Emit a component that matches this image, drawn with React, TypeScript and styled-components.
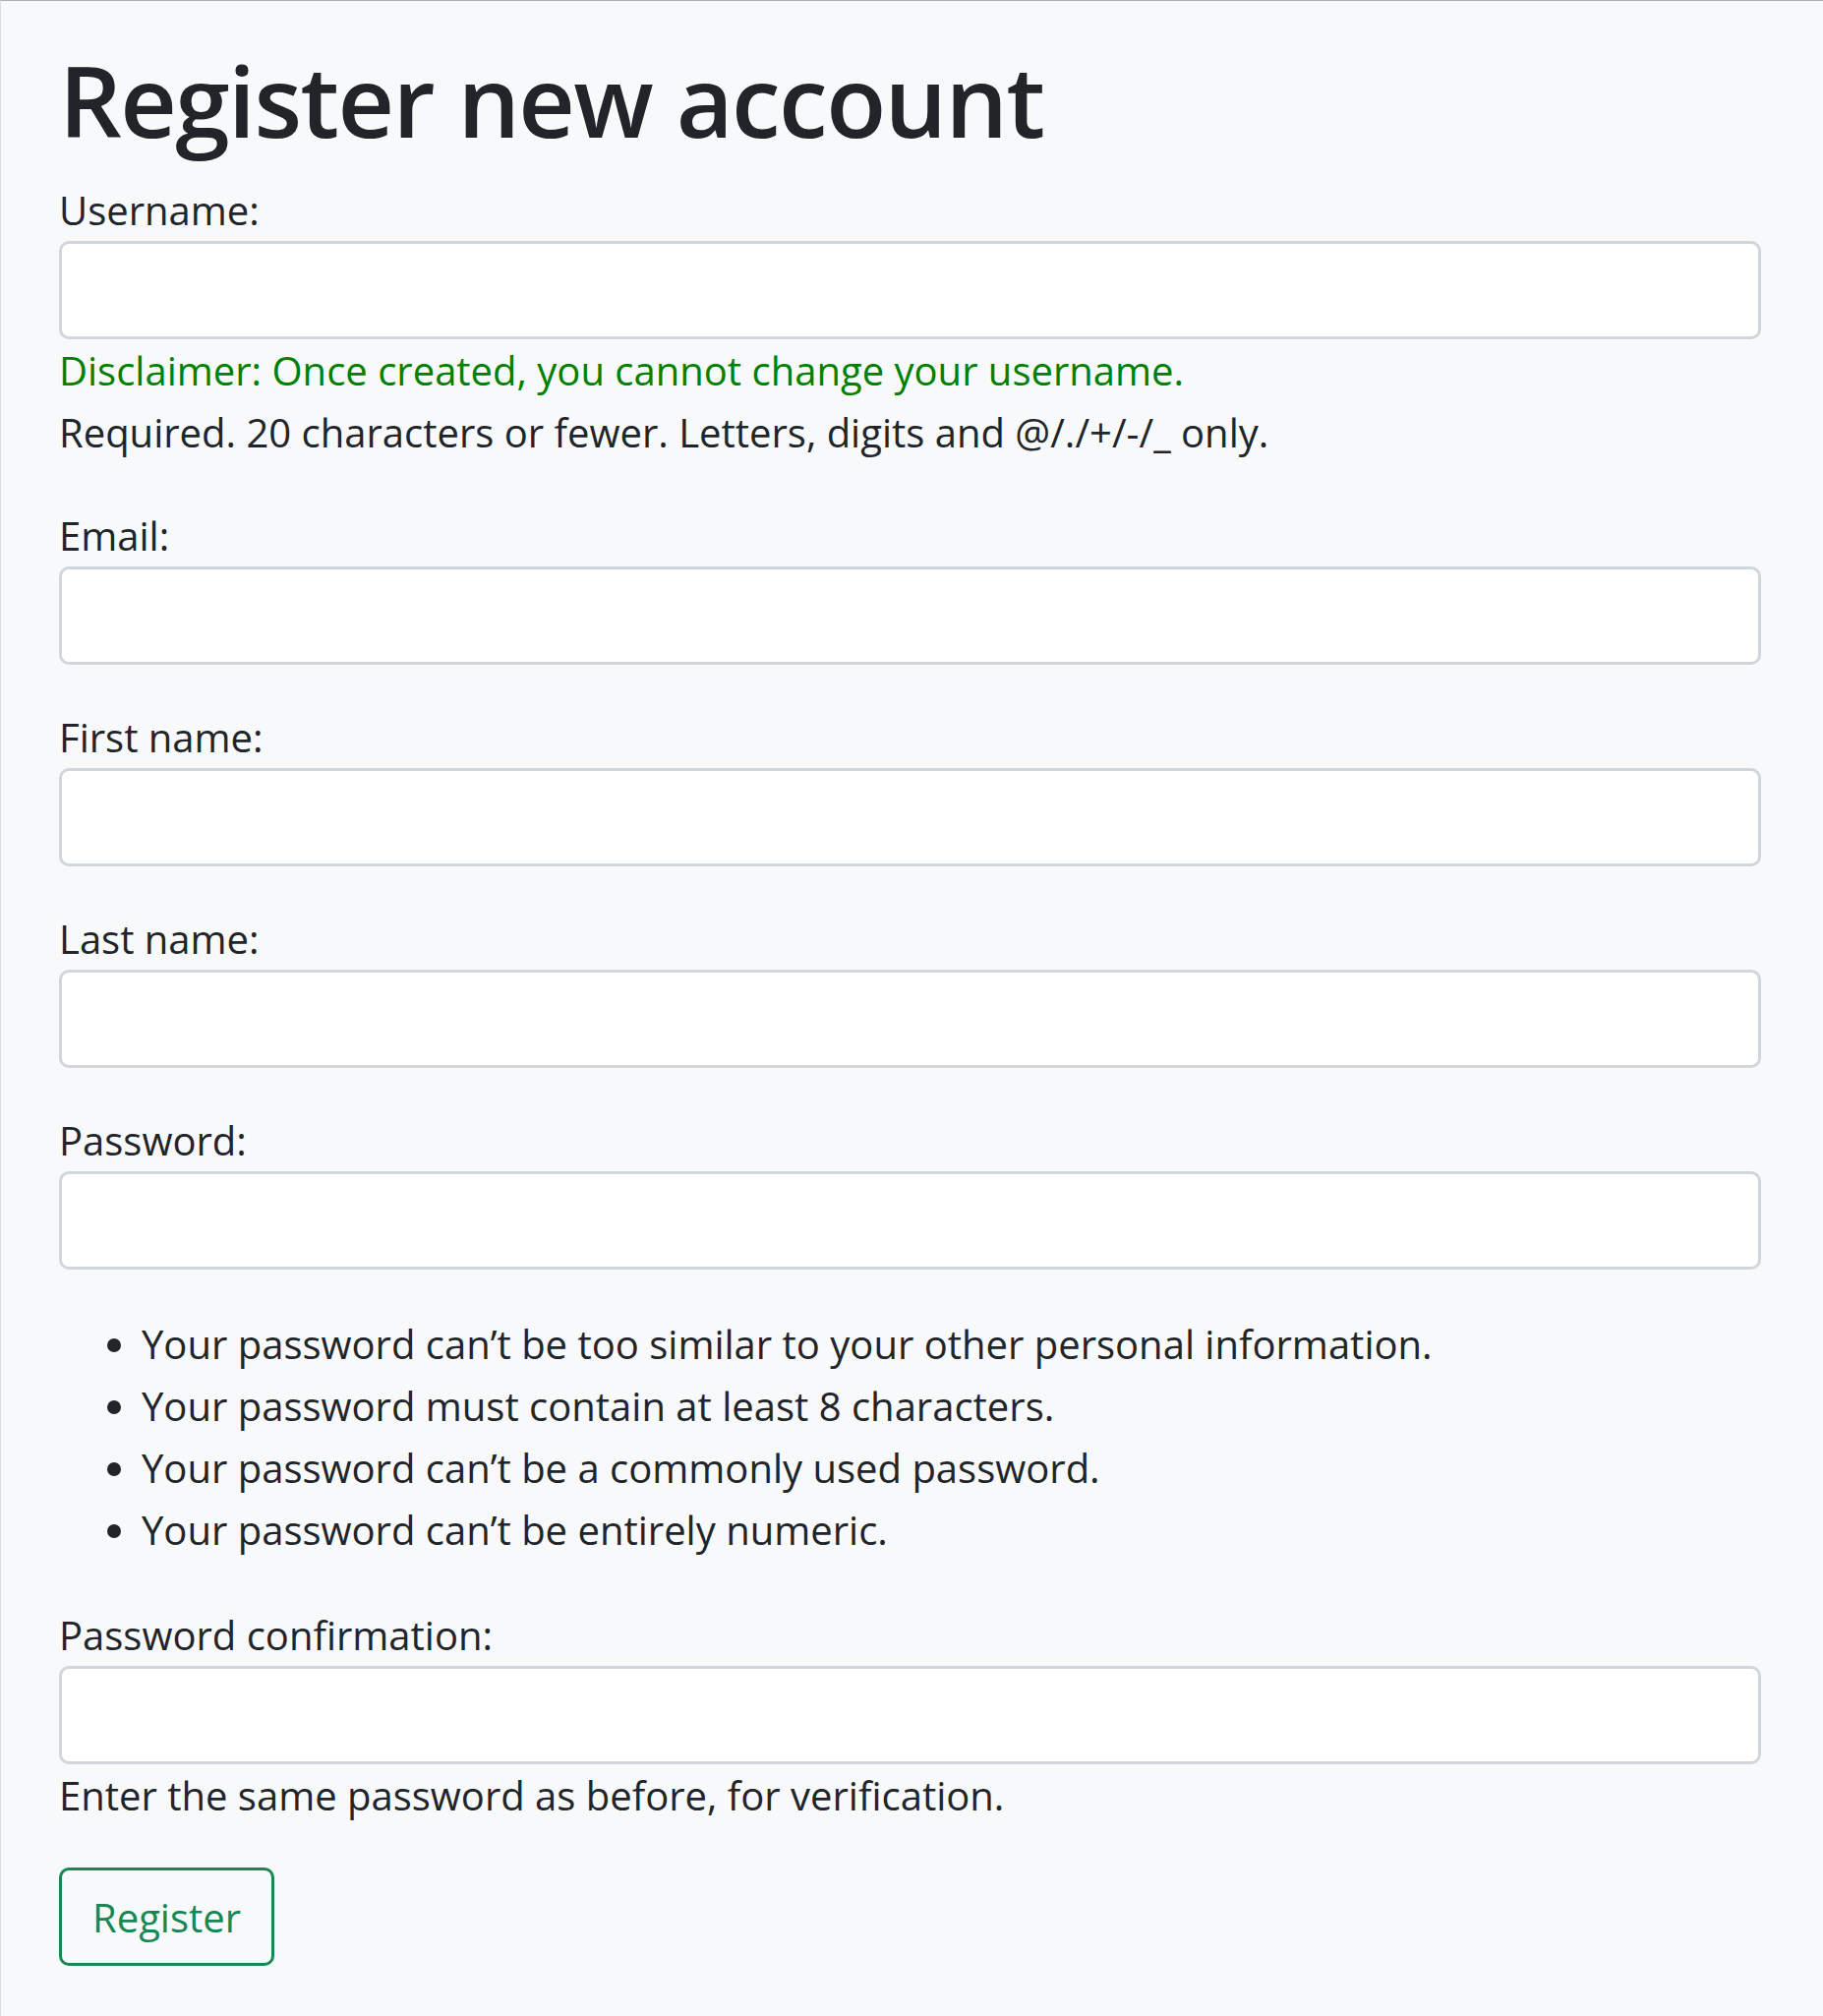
import React from "react";
import styled, { createGlobalStyle } from "styled-components";

const FONT = `"Open Sans", "Noto Sans", "Liberation Sans", sans-serif`;

const GlobalStyle = createGlobalStyle`
  html, body {
    margin: 0;
    padding: 0;
  }
  body {
    background: #f8f9fa;
    color: #212529;
    font-family: ${FONT};
  }
  * { box-sizing: border-box; }
`;

const Page = styled.main`
  min-height: 2050px;
  border-top: 1px solid #acacac;
  border-left: 1px solid #dcdcdc;
  padding: 37px 63px 0 59px;
`;

const Title = styled.h1`
  margin: 0 0 18px;
  font-size: 100px;
  line-height: 126px;
  font-weight: 600;
  letter-spacing: -1.6px;
  color: #212529;
`;

const Form = styled.form`
  display: flex;
  flex-direction: column;
`;

const Field = styled.div`
  display: flex;
  flex-direction: column;
  margin-bottom: 42px;
`;

const Label = styled.label`
  display: block;
  font-size: 40px;
  line-height: 63px;
`;

const Input = styled.input`
  display: block;
  width: 100%;
  height: 100px;
  margin: 0;
  padding: 0 30px;
  font-family: ${FONT};
  font-size: 40px;
  color: #495057;
  background: #ffffff;
  border: 3px solid #d1d6dc;
  border-radius: 10px;
  outline: none;
`;

const HelpText = styled.span<{ $tone?: "notice" }>`
  display: block;
  font-size: 40px;
  line-height: 63px;
  color: ${(p) => (p.$tone === "notice" ? "#008000" : "#212529")};
`;

const HelpList = styled.ul`
  margin: 44px 0 2px;
  padding-left: 84px;
  font-size: 40px;
  line-height: 63px;
`;

const Button = styled.button`
  align-self: flex-start;
  height: 100px;
  padding: 0 31px;
  font-family: ${FONT};
  font-size: 40px;
  line-height: 63px;
  color: #198754;
  background: transparent;
  border: 3px solid #198754;
  border-radius: 10px;
  cursor: pointer;
`;

const passwordRules = [
  "Your password can’t be too similar to your other personal information.",
  "Your password must contain at least 8 characters.",
  "Your password can’t be a commonly used password.",
  "Your password can’t be entirely numeric.",
];

export default function App() {
  return (
    <>
      <GlobalStyle />
      <Page>
        <Title>Register new account</Title>
        <Form onSubmit={(e) => e.preventDefault()}>
          <Field>
            <Label htmlFor="id_username">Username:</Label>
            <Input id="id_username" type="text" />
            <HelpText $tone="notice">
              Disclaimer: Once created, you cannot change your username.
            </HelpText>
            <HelpText>
              Required. 20 characters or fewer. Letters, digits and @/./+/-/_ only.
            </HelpText>
          </Field>
          <Field>
            <Label htmlFor="id_email">Email:</Label>
            <Input id="id_email" type="email" />
          </Field>
          <Field>
            <Label htmlFor="id_first_name">First name:</Label>
            <Input id="id_first_name" type="text" />
          </Field>
          <Field>
            <Label htmlFor="id_last_name">Last name:</Label>
            <Input id="id_last_name" type="text" />
          </Field>
          <Field>
            <Label htmlFor="id_password1">Password:</Label>
            <Input id="id_password1" type="password" />
            <HelpList>
              {passwordRules.map((r) => (
                <li key={r}>{r}</li>
              ))}
            </HelpList>
          </Field>
          <Field>
            <Label htmlFor="id_password2">Password confirmation:</Label>
            <Input id="id_password2" type="password" />
            <HelpText>Enter the same password as before, for verification.</HelpText>
          </Field>
          <Button type="submit">Register</Button>
        </Form>
      </Page>
    </>
  );
}
